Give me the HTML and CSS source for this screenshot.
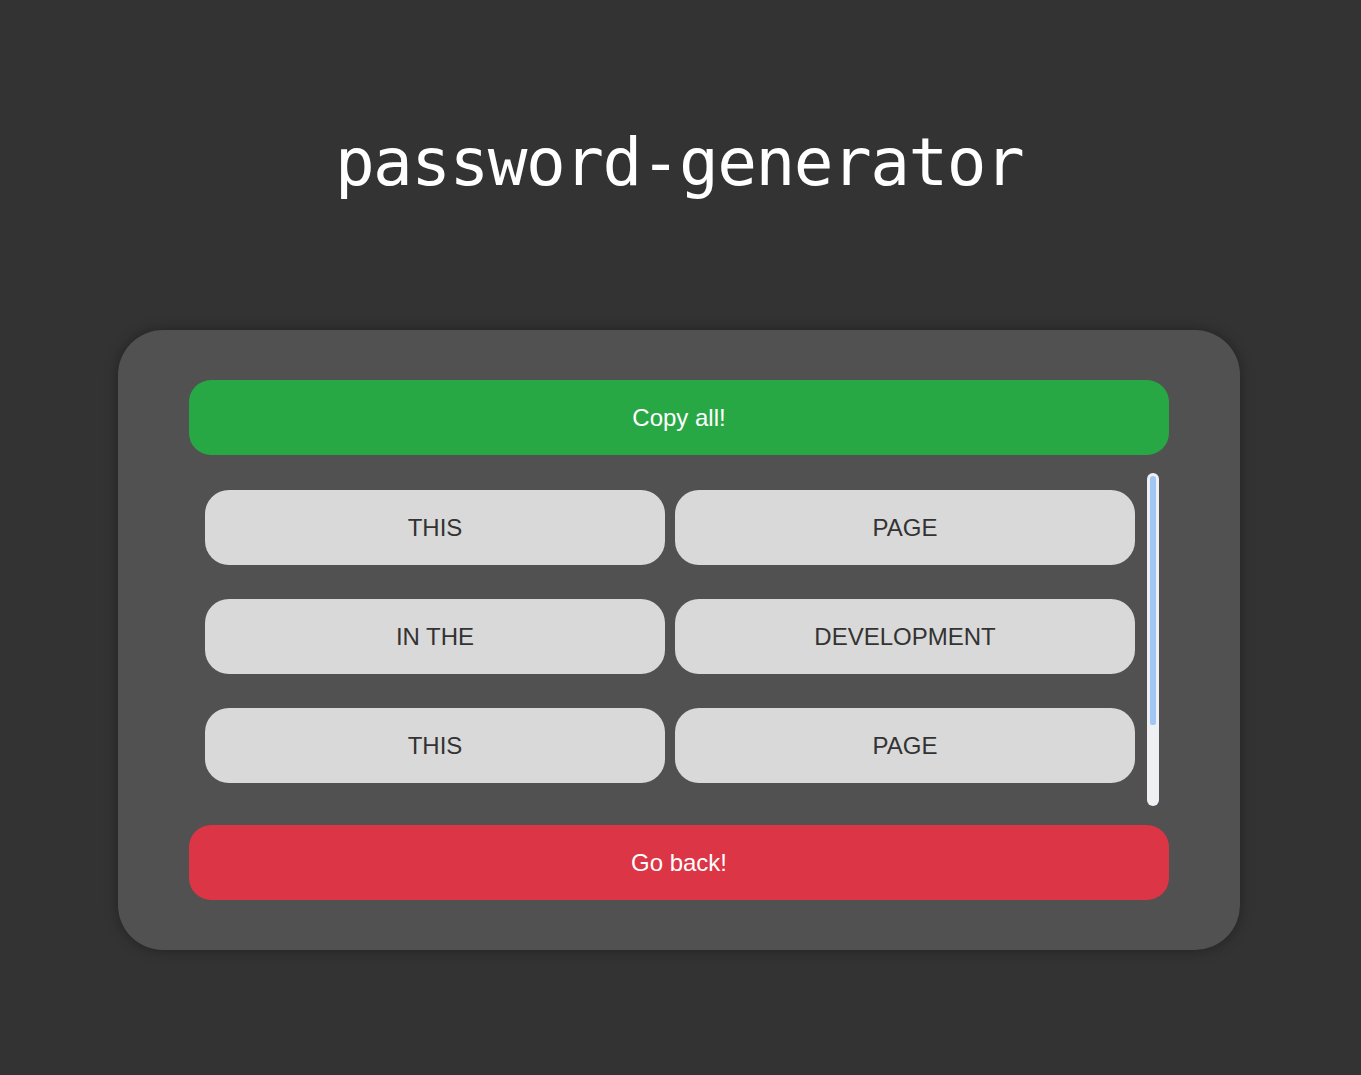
FILE: index.html
```html
<!DOCTYPE html>
<html lang="en">
<head>
<meta charset="utf-8">
<title>password-generator</title>
<link rel="stylesheet" href="styles.css">
</head>
<body>
<header class="header">
  <h1 class="title">password-generator</h1>
</header>
<main class="card">
  <button class="btn btn-copy">Copy all!</button>
  <div class="list-wrap">
    <div class="list">
      <div class="item">THIS</div>
      <div class="item">PAGE</div>
      <div class="item">IN THE</div>
      <div class="item">DEVELOPMENT</div>
      <div class="item">THIS</div>
      <div class="item">PAGE</div>
    </div>
    <div class="scrollbar"><div class="thumb"></div></div>
  </div>
  <button class="btn btn-back">Go back!</button>
</main>
</body>
</html>
```
FILE: styles.css
```css
html, body {
  margin: 0;
  padding: 0;
  background: #333333;
  height: 100%;
}
body {
  font-family: "Liberation Sans", Arial, sans-serif;
  display: flex;
  flex-direction: column;
  align-items: center;
}
.header {
  height: 330px;
  width: 100%;
  display: flex;
  justify-content: center;
}
.title {
  margin: 120px 3px 0 0;
  font-family: "DejaVu Sans Mono", monospace;
  font-weight: normal;
  font-size: 66px;
  letter-spacing: -1.5px;
  line-height: 86px;
  color: #ffffff;
}
.card {
  width: 980px;
  padding: 50px 71px;
  margin-right: 3px;
  background: #515151;
  border-radius: 45px;
  box-shadow: 0 0 14px rgba(0, 0, 0, 0.35);
  display: flex;
  flex-direction: column;
}
.btn {
  height: 75px;
  border: none;
  border-radius: 22px;
  color: #ffffff;
  font-family: "Liberation Sans", Arial, sans-serif;
  font-size: 24px;
  cursor: pointer;
}
.btn-copy {
  background: #28a745;
}
.btn-back {
  background: #dc3545;
}
.list-wrap {
  margin: 18px 0 19px 0;
  height: 333px;
  display: flex;
}
.list {
  flex: 1;
  padding: 17px 12px 17px 16px;
  display: grid;
  grid-template-columns: 1fr 1fr;
  column-gap: 10px;
  row-gap: 34px;
  grid-auto-rows: 75px;
  overflow: hidden;
}
.scrollbar {
  width: 12px;
  margin-right: 10px;
  box-sizing: border-box;
  padding: 3px;
  background: #eef0f3;
  border-radius: 6px;
}
.thumb {
  height: 249px;
  background: #a0c6f3;
  border-radius: 3px 3px 2px 2px;
}
.item {
  background: #d9d9d9;
  border-radius: 24px;
  display: flex;
  align-items: center;
  justify-content: center;
  color: #333333;
  font-size: 24px;
  text-transform: uppercase;
}
```
